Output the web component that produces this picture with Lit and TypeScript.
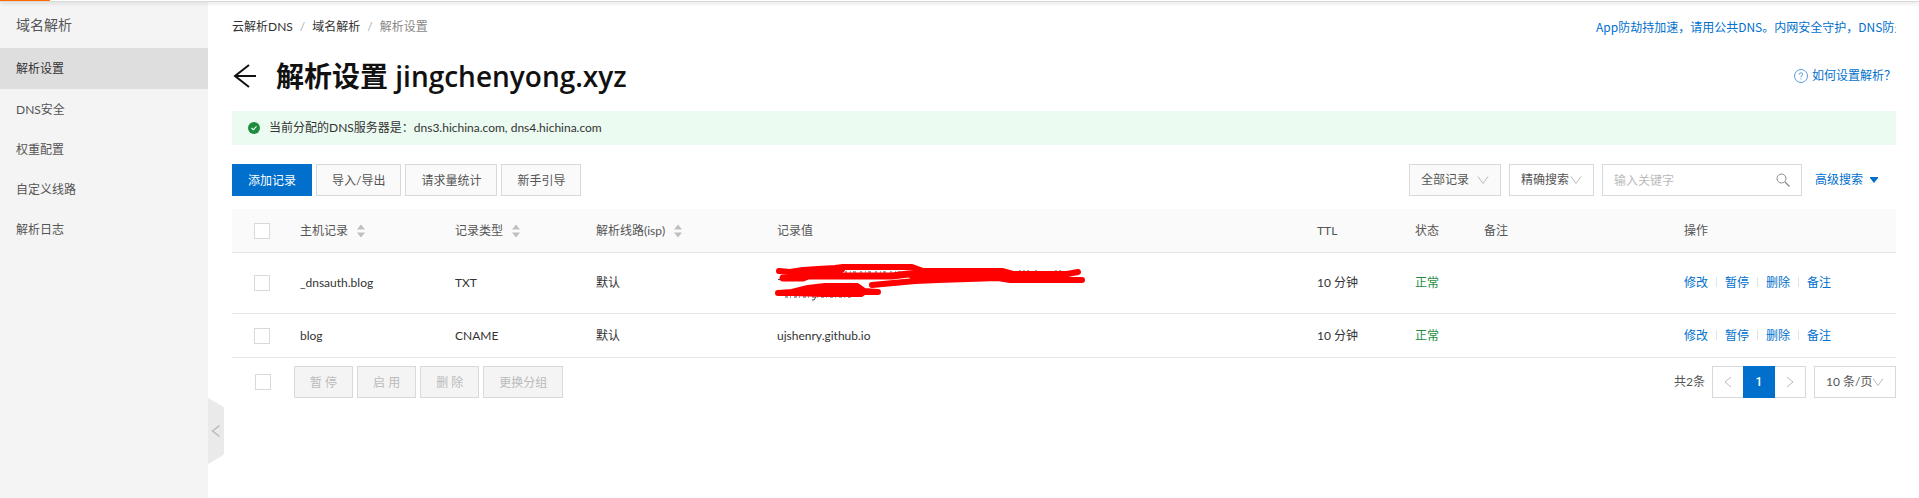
import { LitElement, html, css, svg } from "lit";
import { customElement, property } from "lit/decorators.js";

interface DnsRecord {
  host: string;
  type: string;
  line: string;
  value: string;
  masked?: boolean;
  ttl: string;
  status: string;
}

const RECORDS: DnsRecord[] = [
  { host: "_dnsauth.blog", type: "TXT", line: "默认", value: "", masked: true, ttl: "10 分钟", status: "正常" },
  { host: "blog", type: "CNAME", line: "默认", value: "ujshenry.github.io", ttl: "10 分钟", status: "正常" },
];

const FONT = css`Lato, "Noto Sans CJK SC", sans-serif`;

const chevron = (dir: "left" | "right" | "down") => {
  const d = { left: "M9 1 3 6l6 5", right: "M3 1l6 5-6 5", down: "M1 2.500l5 7 5-7" }[dir];
  return html`<svg class="chevron" viewBox="0 0 12 12" width="12" height="12" aria-hidden="true">
    <path d=${d} fill="none" stroke="currentColor" stroke-width="1" />
  </svg>`;
};

const sorter = html`<svg class="sorter" viewBox="0 0 8 14" width="8" height="14" aria-hidden="true">
  <path d="M4 0.5 8 5.5H0zM4 13.5 0 8.5h8z" fill="#bfbfbf" />
</svg>`;

@customElement("app-sidebar")
export class AppSidebar extends LitElement {
  @property() active = "解析设置";
  items = ["解析设置", "DNS安全", "权重配置", "自定义线路", "解析日志"];

  static styles = css`
    :host { position: relative; display: block; width: 208px; flex: none; background: #f4f4f4; font: 12px/20px ${FONT}; color: #555; }
    .heading { margin: 0; padding: 2px 16px 0; font-size: 14px; font-weight: 400; line-height: 46px; }
    .nav { display: flex; flex-direction: column; }
    .item { padding: 0 16px; line-height: 40px; color: #555; text-decoration: none; }
    .item.on { padding-top: 1px; background: #dedede; color: #333; }
    .item:not(.on) { padding-top: 2px; line-height: 38px; }
    .fold { position: absolute; left: 100%; top: 398px; width: 16px; height: 66px; padding: 0; border: 0; background: none; }
    .fold svg { display: block; }
  `;

  render() {
    return html`
      <h2 class="heading">域名解析</h2>
      <nav class="nav">
        ${this.items.map((t) => html`<a href="#" class="item ${t === this.active ? "on" : ""}">${t}</a>`)}
      </nav>
      <button class="fold" aria-label="收起菜单">
        <svg viewBox="0 0 16 66" width="16" height="66">
          <path d="M0 0 14 8q2 1 2 3v44q0 2-2 3L0 66z" fill="#eaeaea" />
          <path d="M11.500 27.500 4.500 33l7 5.500" fill="none" stroke="#b5b5b5" stroke-width="1.200" />
        </svg>
      </button>
    `;
  }
}

@customElement("record-table")
export class RecordTable extends LitElement {
  @property({ attribute: false }) records: DnsRecord[] = [];

  static styles = css`
    :host { display: block; font: 12px/20px ${FONT}; color: #333; }
    .grid { width: 100%; border-collapse: collapse; table-layout: fixed; }
    .c-check { width: 52px; }
    .c-host { width: 155px; }
    .c-type { width: 141px; }
    .c-line { width: 181px; }
    .c-ttl { width: 98px; }
    .c-status { width: 69px; }
    .c-note { width: 200px; }
    .c-ops { width: 228px; }
    th, td { padding: 0 16px; height: 43px; text-align: left; font-weight: 400; border-bottom: 1px solid #e5e6e8; white-space: nowrap; }
    th { background: #fafafa; color: #555; }
    .pick { padding: 0 0 0 22px; }
    .masked td { height: 60px; }
    .box { display: block; appearance: none; width: 16px; height: 16px; margin: 0; border: 1px solid #d9d9d9; background: #fff; }
    .sort { display: inline-flex; align-items: center; gap: 9px; }
    .scribble { display: block; margin: 0 0 0 -4px; }
    .ok { color: #1e8e3e; }
    .ops { display: flex; align-items: center; }
    .ops a { color: #0070cc; text-decoration: none; }
    .ops a + a::before { content: ""; display: inline-block; width: 1px; height: 10px; margin: 0 8px; background: #e3e4e6; }
  `;

  scribble = svg`
    <g fill="none" stroke="#444" stroke-width="1">
      <path d="M72 10h68" stroke-dasharray="2 3 1 2 3 4" />
      <path d="M246 9h10M262 9h3M282 9h8M5 17.500h3" stroke-dasharray="2 2" />
      <path d="M12 35h68" stroke-dasharray="3 2 1 3" />
      <path d="M43 35l-2 3h-2" />
    </g>
    <g fill="#f00" stroke="#f00" stroke-linecap="round" stroke-linejoin="round" stroke-width="6">
      <path fill="none" d="M6 9l11 1 13-2 15-1 17-1 8-1h69l11 4h79l11 3h54l11-2" />
      <path fill="none" d="M10 16h20l5-2h84l16-2 14-1" stroke-width="7" />
      <path fill="none" d="M309 18h-72l-12-2-60 2-23 1-43 4" />
      <path d="M17 12l13-3 32-3 8 2-8 5H30l-13 2z" stroke-width="4" />
      <path d="M135 12l15-3h79l11 3h54v6h-57l-12-2-60 2h-23z" stroke-width="4" />
      <path d="M5 31l14-1 16-4 17-2h32l7 5 14 1-14 0-3 2H50l-30-1z" stroke-width="6" />
    </g>`;

  render() {
    return html`
      <table class="grid">
        <colgroup>
          <col class="c-check" /><col class="c-host" /><col class="c-type" /><col class="c-line" /><col />
          <col class="c-ttl" /><col class="c-status" /><col class="c-note" /><col class="c-ops" />
        </colgroup>
        <thead>
          <tr>
            <th class="pick"><input class="box" type="checkbox" aria-label="全选" /></th>
            <th><span class="sort">主机记录${sorter}</span></th>
            <th><span class="sort">记录类型${sorter}</span></th>
            <th><span class="sort">解析线路(isp)${sorter}</span></th>
            <th>记录值</th>
            <th>TTL</th>
            <th>状态</th>
            <th>备注</th>
            <th>操作</th>
          </tr>
        </thead>
        <tbody>
          ${this.records.map((r) => html`
            <tr class=${r.masked ? "masked" : ""}>
              <td class="pick"><input class="box" type="checkbox" aria-label=${r.host} /></td>
              <td>${r.host}</td>
              <td>${r.type}</td>
              <td>${r.line}</td>
              <td>${r.masked
                ? html`<svg class="scribble" viewBox="0 0 316 42" width="316" height="42" aria-hidden="true">${this.scribble}</svg>`
                : r.value}</td>
              <td>${r.ttl}</td>
              <td class="ok">${r.status}</td>
              <td></td>
              <td><div class="ops">${["修改", "暂停", "删除", "备注"].map((o) => html`<a href="#">${o}</a>`)}</div></td>
            </tr>`)}
        </tbody>
      </table>
    `;
  }
}

@customElement("app-root")
export class AppRoot extends LitElement {
  static styles = css`
    :host { display: block; font: 12px/20px ${FONT}; color: #333; background: #fff; }
    .topline { position: absolute; left: 0; right: 0; top: 0; height: 1px; background: #fff; border-bottom: 1px solid #d8d9d9; box-shadow: 0 1px 4px rgba(0, 0, 0, 0.18); }
    .topline span { display: block; width: 50px; height: 1px; background: #ff6a00; }
    .shell { display: flex; min-height: 100vh; }
    .main { flex: 1; min-width: 0; padding: 0 23px 0 24px; }
    a { color: #0070cc; text-decoration: none; }
    button, input, select { font: inherit; box-sizing: border-box; border-radius: 0; margin: 0; }
    .row { display: flex; align-items: center; }
    .between { justify-content: space-between; }
    .crumbs { gap: 7px; color: #888; }
    .crumbs a { color: #333; }
    .notice { width: 300px; overflow: hidden; white-space: nowrap; font-family: "Noto Sans CJK SC", sans-serif; }
    .slash { color: #aaa; }
    .top { padding-top: 17px; }
    .titlebar { height: 40px; margin-top: 19px; }
    .back { width: 24px; height: 24px; padding: 0; border: 0; background: none; margin-right: 20px; }
    .back svg, .search svg { display: block; }
    .title { margin: 0; font-family: "Open Sans", "Noto Sans CJK SC", sans-serif; font-size: 28px; line-height: 40px; font-weight: 600; color: #111; }
    .help { display: flex; align-items: center; gap: 4px; }
    .alert { display: flex; align-items: center; gap: 9px; height: 34px; margin-top: 15px; padding: 0 16px; background: #ebfbf1; }
    .tools { margin-top: 19px; }
    .group { display: flex; align-items: center; gap: 4px; }
    .btn { height: 32px; min-width: 59px; padding: 1px 15px 0; border: 1px solid #d9d9d9; background: #fafafa; color: #555; white-space: nowrap; }
    .primary { border-color: #0070cc; background: #0070cc; color: #fff; }
    .btn:disabled { background: #f4f4f4; color: #bbb; }
    .filters { display: flex; align-items: center; gap: 8px; }
    .pickbox { position: relative; display: inline-flex; align-items: center; color: #bbb; }
    .pickbox select { appearance: none; height: 32px; padding: 0 11px; border: 1px solid #d9d9d9; background: #fff; color: #555; }
    .pickbox .chevron { position: absolute; right: 12px; pointer-events: none; }
    .groupsel select { width: 92px; background: #fafafa; }
    .modesel select { width: 85px; }
    .sizesel select { width: 82px; }
    .search { position: relative; display: flex; align-items: center; }
    .search input { width: 200px; height: 32px; padding: 0 36px 0 11px; border: 1px solid #d9d9d9; outline: 0; }
    .search input::placeholder { color: #bbb; }
    .search svg { position: absolute; right: 12px; }
    .adv { display: flex; align-items: center; gap: 7px; padding: 0 18px 0 5px; }
    .records { margin-top: 13px; }
    .footer { margin-top: 8px; }
    .bulk { display: flex; align-items: center; gap: 23px; padding-left: 23px; }
    .box { display: block; appearance: none; width: 16px; height: 16px; border: 1px solid #d9d9d9; background: #fff; }
    .pager { display: flex; align-items: center; gap: 7px; color: #555; }
    .pages { display: flex; margin-right: 1px; }
    .pg { display: flex; align-items: center; justify-content: center; width: 32px; height: 32px; padding: 0; border: 1px solid #d9d9d9; background: #fff; color: #bbb; }
    .pg:first-child { width: 31px; border-right: 0; }
    .pg:last-child { width: 31px; border-left: 0; }
    .pg.cur { border-color: #0070cc; background: #0070cc; color: #fff; font-family: Roboto, sans-serif; font-weight: 500; }
  `;

  render() {
    return html`
      <div class="shell">
        <app-sidebar></app-sidebar>
        <main class="main">
          <div class="row between top">
            <nav class="row crumbs">
              <a href="#">云解析DNS</a><span class="slash">/</span>
              <a href="#">域名解析</a><span class="slash">/</span>
              <span>解析设置</span>
            </nav>
            <a class="notice" href="#">App防劫持加速，请用公共DNS。内网安全守护，DNS防火墙</a>
          </div>
          <div class="row between titlebar">
            <div class="row">
              <button class="back" aria-label="返回">
                <svg viewBox="0 0 24 24" width="24" height="24"><path d="M26 12H3M17 1 3 12l14 11" fill="none" stroke="#111" stroke-width="2" /></svg>
              </button>
              <h1 class="title">解析设置 jingchenyong.xyz</h1>
            </div>
            <a class="help" href="#">
              <svg viewBox="0 0 14 14" width="14" height="14" aria-hidden="true">
                <circle cx="7" cy="7" r="6.500" fill="none" stroke="#5a9bd8" />
                <path d="M5.200 5.600q0-1.800 1.800-1.800t1.800 1.600q0 1-1.800 2v1M7 9.500v1" fill="none" stroke="#5a9bd8" />
              </svg>如何设置解析？</a>
          </div>
          <div class="alert" role="status">
            <svg viewBox="0 0 12 12" width="12" height="12" aria-hidden="true">
              <circle cx="6" cy="6" r="6" fill="#1e8e3e" /><path d="M3.500 6 5.300 7.800 8.500 4.300" fill="none" stroke="#fff" stroke-width="1.100" />
            </svg>
            <span>当前分配的DNS服务器是：dns3.hichina.com, dns4.hichina.com</span>
          </div>
          <div class="row between tools">
            <div class="group">
              <button class="btn primary">添加记录</button>
              <button class="btn">导入/导出</button>
              <button class="btn">请求量统计</button>
              <button class="btn">新手引导</button>
            </div>
            <div class="filters">
              <span class="pickbox groupsel"><select aria-label="记录分组"><option>全部记录</option></select>${chevron("down")}</span>
              <span class="pickbox modesel"><select aria-label="搜索方式"><option>精确搜索</option></select>${chevron("down")}</span>
              <span class="search">
                <input type="text" aria-label="关键字" placeholder="输入关键字" />
                <svg viewBox="0 0 14 14" width="14" height="14" aria-hidden="true"><circle cx="5.500" cy="5.500" r="4.500" fill="none" stroke="#888" /><path d="M9 9l4.500 4.500" stroke="#888" stroke-width="1.300" /></svg>
              </span>
              <a class="adv" href="#">高级搜索<svg viewBox="0 0 8 6" width="8" height="6" aria-hidden="true"><path d="M0 0h8v1L4 6 0 1z" fill="#0070cc" /></svg></a>
            </div>
          </div>
          <record-table class="records" .records=${RECORDS}></record-table>
          <div class="row between footer">
            <div class="bulk">
              <input class="box" type="checkbox" aria-label="全选" />
              <div class="group">
                <button class="btn" disabled>暂 停</button>
                <button class="btn" disabled>启 用</button>
                <button class="btn" disabled>删 除</button>
                <button class="btn" disabled>更换分组</button>
              </div>
            </div>
            <div class="pager">
              <span>共2条</span>
              <div class="pages">
                <button class="pg" aria-label="上一页">${chevron("left")}</button>
                <button class="pg cur">1</button>
                <button class="pg" aria-label="下一页">${chevron("right")}</button>
              </div>
              <span class="pickbox sizesel"><select aria-label="每页条数"><option>10 条/页</option></select>${chevron("down")}</span>
            </div>
          </div>
        </main>
      </div>
      <div class="topline"><span></span></div>
    `;
  }
}
